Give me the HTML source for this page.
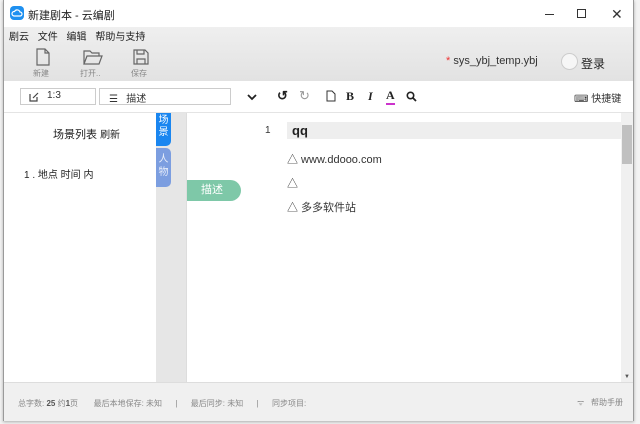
<!DOCTYPE html>
<html><head><meta charset="utf-8"><style>
*{margin:0;padding:0;box-sizing:border-box}
body{width:640px;height:424px;background:#f3f3f3;font-family:"Liberation Sans","Noto Sans CJK SC",sans-serif;font-size:11px;color:#333;position:relative;overflow:hidden}
.win{position:absolute;left:3px;top:0;width:631px;height:421px;border:1px solid #9a9a9a;border-top:none;background:#fff;box-shadow:0 1px 3px rgba(0,0,0,.3)}
.abs{position:absolute}
</style></head><body>
<div class="win">
 <div class="abs" style="left:0;top:0;width:629px;height:27px;background:#fff">
  <div class="abs" style="left:6px;top:6px;width:14px;height:14px;border-radius:4px;background:#1e90f0"></div>
  <svg class="abs" style="left:7px;top:8px" width="12" height="10" viewBox="0 0 12 10"><path d="M3 8h6a2 2 0 0 0 0-4a3 3 0 0 0-5.5-0.5A2 2 0 0 0 3 8z" fill="none" stroke="#fff" stroke-width="1.2"/></svg>
  <div class="abs" style="left:24px;top:7px;font-size:11px;color:#222">新建剧本 - 云编剧</div>
  <div class="abs" style="left:541px;top:14px;width:9px;height:1px;background:#333"></div>
  <div class="abs" style="left:573px;top:9px;width:9px;height:9px;border:1px solid #333"></div>
  <div class="abs" style="left:607px;top:6px;font-size:14px;color:#333">✕</div>
 </div>
 <div class="abs" style="left:0;top:27px;width:629px;height:54px;background:linear-gradient(#efefef,#e2e2e2)">
  <div class="abs" style="left:5px;top:1px;font-size:10px;color:#222;word-spacing:6px">剧云 文件 编辑 帮助与支持</div>
  <svg class="abs" style="left:32px;top:21px" width="14" height="18" viewBox="0 0 14 18"><path d="M1 1h8l4 4v12H1z M9 1v4h4" fill="none" stroke="#666" stroke-width="1.2"/></svg>
  <svg class="abs" style="left:79px;top:23px" width="20" height="15" viewBox="0 0 20 15"><path d="M1 14V1h6l2 2h7v3 M1 14l3-8h15l-3 8z" fill="none" stroke="#666" stroke-width="1.2"/></svg>
  <svg class="abs" style="left:129px;top:22px" width="16" height="16" viewBox="0 0 16 16"><path d="M1 1h11l3 3v11H1z M4 1v4h7V1 M4 15v-5h8v5" fill="none" stroke="#666" stroke-width="1.2"/></svg>
  <div class="abs" style="left:29px;top:41px;font-size:8px;color:#888">新建</div>
  <div class="abs" style="left:76px;top:41px;font-size:8px;color:#888">打开..</div>
  <div class="abs" style="left:127px;top:41px;font-size:8px;color:#888">保存</div>
  <div class="abs" style="left:442px;top:28px;font-size:11px;color:#333"><span style="color:#e33">*</span> sys_ybj_temp.ybj</div>
  <div class="abs" style="left:557px;top:26px;width:17px;height:17px;border-radius:50%;border:1px solid #ccc;background:#f6f6f6"></div>
  <div class="abs" style="left:577px;top:28px;font-size:12px;color:#222">登录</div>
 </div>
 <div class="abs" style="left:0;top:81px;width:629px;height:32px;background:#fff;border-bottom:1px solid #e4e4e4">
  <div class="abs" style="left:16px;top:7px;width:76px;height:17px;border:1px solid #ccc"></div>
  <svg class="abs" style="left:25px;top:11px" width="10" height="10" viewBox="0 0 10 10"><path d="M1 2v7h7V5 M4 6l5-5" fill="none" stroke="#444" stroke-width="1.2"/></svg>
  <div class="abs" style="left:43px;top:9px;font-size:10px;color:#333">1:3</div>
  <div class="abs" style="left:95px;top:7px;width:132px;height:17px;border:1px solid #ccc"></div>
  <div class="abs" style="left:105px;top:9px;font-size:10px;color:#333">☰&nbsp;&nbsp; 描述</div>
  <svg class="abs" style="left:243px;top:13px" width="10" height="7" viewBox="0 0 10 7"><path d="M1 1l4 4 4-4" fill="none" stroke="#222" stroke-width="1.8"/></svg>
  <div class="abs" style="left:273px;top:7px;font-size:13px;color:#222;font-weight:bold">↺</div>
  <div class="abs" style="left:295px;top:7px;font-size:13px;color:#999">↻</div>
  <svg class="abs" style="left:322px;top:9px" width="10" height="12" viewBox="0 0 10 12"><path d="M1 1h5l3 3v7H1z" fill="none" stroke="#333"/></svg>
  <div class="abs" style="left:342px;top:8px;font-size:12px;font-weight:bold;font-family:'Liberation Serif',serif;color:#222">B</div>
  <div class="abs" style="left:364px;top:8px;font-size:12px;font-style:italic;font-weight:bold;font-family:'Liberation Serif',serif;color:#222">I</div>
  <div class="abs" style="left:382px;top:7px;font-size:12px;font-weight:bold;font-family:'Liberation Serif',serif;color:#222;border-bottom:2px solid #c3c">A</div>
  <svg class="abs" style="left:402px;top:10px" width="11" height="11" viewBox="0 0 11 11"><circle cx="4.5" cy="4.5" r="3.2" fill="none" stroke="#222" stroke-width="1.6"/><path d="M7 7l3 3" stroke="#222" stroke-width="1.8"/></svg>
  <div class="abs" style="left:570px;top:9px;font-size:10px;color:#333">⌨ 快捷键</div>
 </div>
 <div class="abs" style="left:49px;top:126px;font-size:11px;color:#222">场景列表 <span style="font-size:10px">刷新</span></div>
 <div class="abs" style="left:20px;top:166px;font-size:10px;color:#222">1 . 地点 时间 内</div>
 <div class="abs" style="left:152px;top:113px;width:31px;height:269px;background:#e6e6e6;border-right:1px solid #ddd"></div>
 <div class="abs" style="left:152px;top:113px;width:15px;height:33px;background:#1a86f0;border-radius:0 0 5px 0;color:#fff;font-size:10px;line-height:12px;text-align:center;padding-top:2px">场<br>景</div>
 <div class="abs" style="left:152px;top:148px;width:15px;height:39px;background:#7c9ee0;border-radius:0 5px 5px 0;color:#e8eefa;font-size:10px;line-height:13px;text-align:center;padding-top:5px">人<br>物</div>
 <div class="abs" style="left:183px;top:180px;width:54px;height:21px;background:#7ec8a8;border-radius:0 11px 11px 0;color:#fff;font-size:11px;line-height:21px;padding-left:14px">描述</div>
 <div class="abs" style="left:261px;top:125px;font-size:10px;color:#333">1</div>
 <div class="abs" style="left:283px;top:122px;width:334px;height:17px;background:#eeeeee"></div>
 <div class="abs" style="left:288px;top:123px;font-size:13px;font-weight:bold;color:#222">qq</div>
 <div class="abs" style="left:283px;top:151px;font-size:11px;color:#333">△ www.ddooo.com</div>
 <div class="abs" style="left:283px;top:175px;font-size:11px;color:#333">△</div>
 <div class="abs" style="left:283px;top:199px;font-size:11px;color:#333">△ 多多软件站</div>
 <div class="abs" style="left:617px;top:113px;width:12px;height:269px;background:#f0f0f0"></div>
 <div class="abs" style="left:618px;top:125px;width:10px;height:39px;background:#c0c0c0"></div>
 <div class="abs" style="left:620px;top:374px;font-size:6px;color:#555">▼</div>
 <div class="abs" style="left:0;top:382px;width:629px;height:39px;background:#f0f0f0;border-top:1px solid #ddd">
  <div class="abs" style="left:14px;top:15px;font-size:8px;color:#888;white-space:nowrap">总字数: <b style="color:#555">25</b> 约<b style="color:#555">1</b>页 &nbsp;&nbsp;&nbsp;&nbsp;&nbsp; 最后本地保存: 未知 &nbsp;&nbsp;&nbsp;&nbsp; | &nbsp;&nbsp;&nbsp;&nbsp; 最后同步: 未知 &nbsp;&nbsp;&nbsp;&nbsp; | &nbsp;&nbsp;&nbsp;&nbsp; 同步项目:</div>
  <div class="abs" style="left:573px;top:14px;font-size:8px;color:#888">ᯤ &nbsp; 帮助手册</div>
 </div>
</div>
</body></html>
